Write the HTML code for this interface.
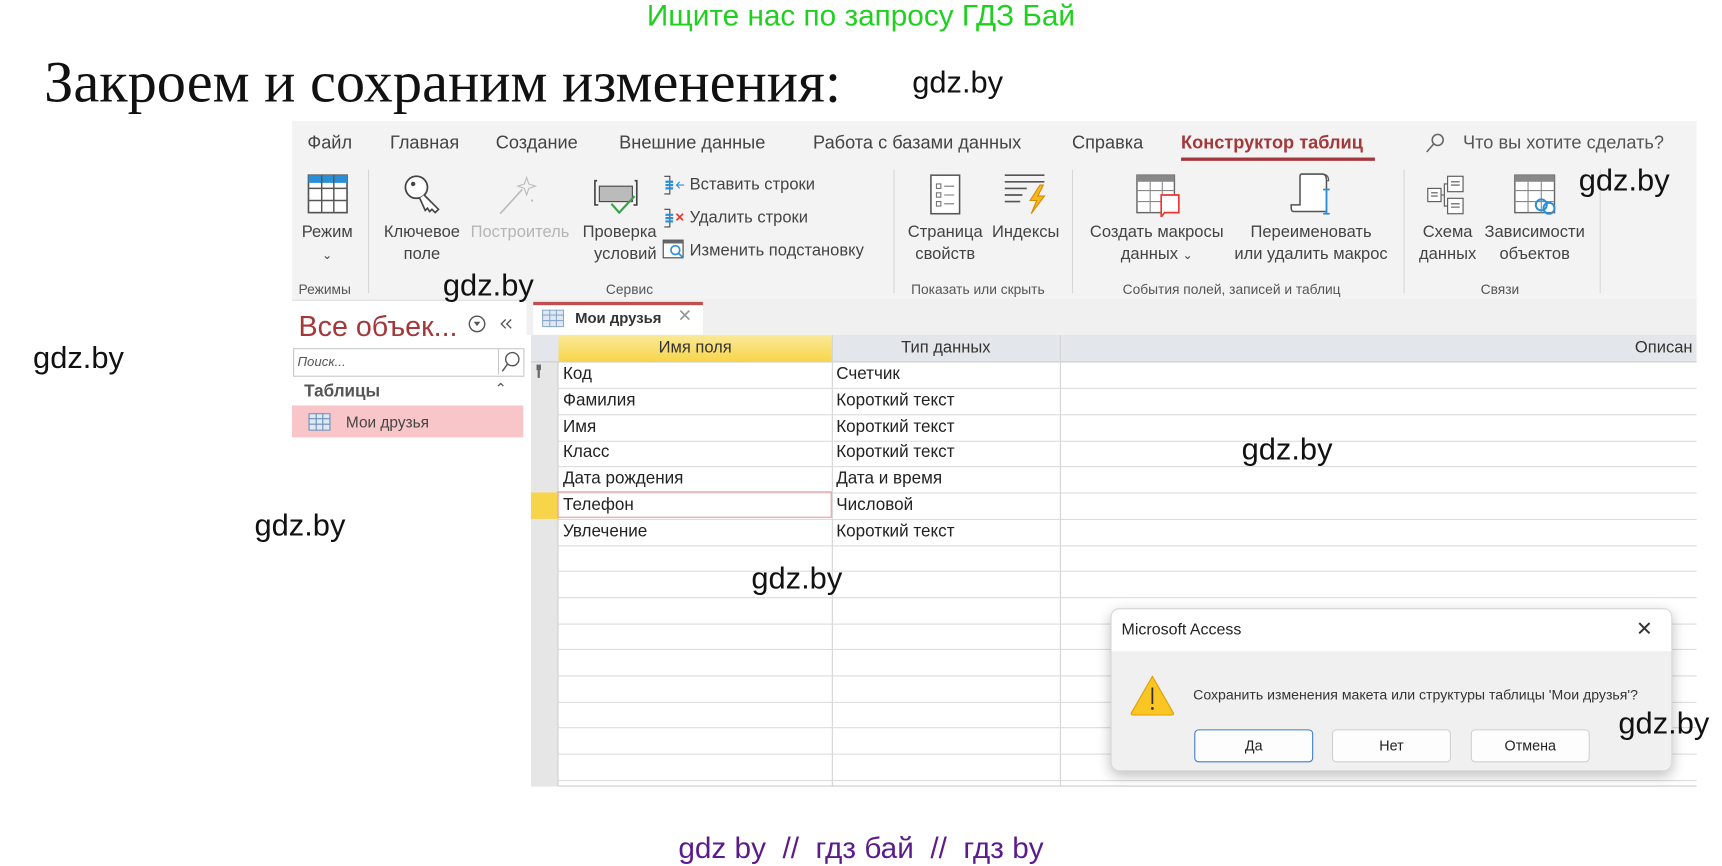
<!DOCTYPE html>
<html><head><meta charset="utf-8">
<style>
html,body{margin:0;padding:0;background:#fff;width:1722px;height:865px;overflow:hidden}
#w{position:absolute;left:0;top:0;width:1563px;height:785px;transform:scale(1.1017);transform-origin:0 0;font-family:"Liberation Sans",sans-serif}
.a{position:absolute;white-space:nowrap}
.rb{color:#444;font-size:15px;line-height:20px;text-align:center}
.gl{font-size:12.5px;color:#555;line-height:16px}
.gd{font-size:28px;color:#111;line-height:30px}
.row{position:absolute;left:507px;width:1033px;height:23.7px;border-bottom:1px solid #dcdcdc;font-size:15.5px;color:#222;line-height:23px}
.row span{position:absolute;left:4px}
.row b{position:absolute;left:252px;font-weight:normal}
.sep{position:absolute;width:1px;background:#d6d6d6}
.btn{position:absolute;top:662px;width:106px;height:28px;border:1px solid #d0d0d0;background:#fdfdfd;border-radius:4px;font-size:13px;line-height:28px;text-align:center;color:#222}
</style></head><body>
<div id="w">
<div class="a" style="left:0;width:1563px;top:-1px;text-align:center;color:#1fd11f;font-size:27px;line-height:30px">Ищите нас по запросу ГДЗ Бай</div>
<div class="a" style="left:40px;top:44px;font-family:'Liberation Serif',serif;font-size:53px;line-height:62px;color:#111">Закроем и сохраним изменения:</div>
<div class="a gd" style="left:828px;top:60px">gdz.by</div>

<!-- ribbon -->
<div class="a" style="left:265px;top:110px;width:1275px;height:162px;background:#f3f3f3;border-bottom:1px solid #ddd"></div>
<div class="a" style="left:265px;top:120px;font-size:16.5px;color:#444;line-height:20px">
<span class="a" style="left:14px">Файл</span><span class="a" style="left:89px">Главная</span><span class="a" style="left:185px">Создание</span><span class="a" style="left:297px">Внешние данные</span><span class="a" style="left:473px">Работа с базами данных</span><span class="a" style="left:708px">Справка</span><span class="a" style="left:807px;color:#a4373a;font-weight:bold">Конструктор таблиц</span><span class="a" style="left:1063px;color:#555">Что вы хотите сделать?</span></div>
<div class="a" style="left:1072px;top:143px;width:176px;height:3px;background:#a4373a"></div>
<svg class="a" style="left:1293px;top:120px" width="20" height="20"><circle cx="12" cy="7" r="5" fill="none" stroke="#666" stroke-width="1.4"/><line x1="8.5" y1="10.5" x2="2" y2="18" stroke="#666" stroke-width="1.4"/></svg>

<!-- ribbon icons -->
<svg class="a" style="left:279px;top:158px" width="38" height="38"><rect x="1" y="1" width="35" height="34" fill="#fff" stroke="#555" stroke-width="1.5"/><rect x="1" y="1" width="35" height="7" fill="#2b8fd8"/><path d="M1 13H36M1 24H36M13 1V35M24 1V35" stroke="#555" stroke-width="1.3"/></svg>
<svg class="a" style="left:365px;top:158px" width="40" height="38"><circle cx="13" cy="12" r="10" fill="#fff" stroke="#444" stroke-width="1.6"/><circle cx="10" cy="9" r="2" fill="#444"/><path d="M20 19L33 32 30 35 27 32 25 34 23 31 21 33 16 22" fill="#fff" stroke="#444" stroke-width="1.5"/></svg>
<svg class="a" style="left:450px;top:158px" width="40" height="40"><path d="M4 36L24 14" stroke="#bbb" stroke-width="1.5"/><path d="M28 3l2 6 6 2-6 2-2 6-2-6-6-2 6-2z" fill="none" stroke="#bbb"/><circle cx="33" cy="24" r="1" fill="#bbb"/></svg>
<svg class="a" style="left:538px;top:160px" width="44" height="38"><path d="M4 4H2V26H5M38 4H40V26H37" stroke="#444" fill="none" stroke-width="1.5"/><rect x="6" y="9" width="30" height="14" fill="#bbb" stroke="#444"/><path d="M17 25L24 33 38 18" stroke="#3aa34a" fill="none" stroke-width="2"/></svg>
<svg class="a" style="left:601px;top:157px" width="22" height="80"><path d="M2 3H7V19H2" fill="none" stroke="#444"/><path d="M3 8H10M3 11H10M3 14H10" stroke="#2b8fd8" stroke-width="2"/><path d="M20 11H13M16 8L13 11 16 14" stroke="#2b8fd8" fill="none"/><path d="M2 33H7V49H2" fill="none" stroke="#444"/><path d="M3 38H10M3 41H10M3 44H10" stroke="#2b8fd8" stroke-width="2"/><path d="M13 37L19 43M19 37L13 43" stroke="#e33" stroke-width="1.5"/><rect x="1" y="61" width="18" height="16" fill="#fff" stroke="#444"/><rect x="1" y="61" width="18" height="3" fill="#666"/><circle cx="12" cy="70" r="4" fill="none" stroke="#2b8fd8" stroke-width="1.5"/><path d="M15 73L19 77" stroke="#2b8fd8" stroke-width="1.5"/></svg>
<div class="a" style="left:626px;top:158px;font-size:15px;color:#444;line-height:20px">Вставить строки</div>
<div class="a" style="left:626px;top:188px;font-size:15px;color:#444;line-height:20px">Удалить строки</div>
<div class="a" style="left:626px;top:218px;font-size:15px;color:#444;line-height:20px">Изменить подстановку</div>

<svg class="a" style="left:843px;top:158px" width="30" height="38"><rect x="2" y="1" width="26" height="35" fill="#fff" stroke="#555" stroke-width="1.4"/><path d="M7 9h4v4h-4zM7 17h4v4h-4zM7 25h4v4h-4zM14 11h9M14 19h9M14 27h9" stroke="#777" fill="none"/></svg>
<svg class="a" style="left:910px;top:156px" width="42" height="40"><path d="M2 3H38M2 9H38M2 15H22M2 21H18M2 27H16" stroke="#555" stroke-width="1.5"/><path d="M34 12L25 26H31L26 38 38 22H32L37 12Z" fill="#f5b81e" stroke="#d98a00"/></svg>
<svg class="a" style="left:1030px;top:157px" width="44" height="40"><rect x="2" y="2" width="34" height="34" fill="#fff" stroke="#666" stroke-width="1.3"/><rect x="2" y="2" width="34" height="6" fill="#888"/><path d="M2 16H36M2 26H36M14 8V36M25 8V36" stroke="#888"/><path d="M24 20H40V36H27L24 40Z" fill="#fff" stroke="#e33" stroke-width="1.5"/></svg>
<svg class="a" style="left:1170px;top:156px" width="44" height="42"><path d="M12 2H30Q34 2 34 7V36H4Q2 36 2 32V30H10V4Q10 2 12 2Z" fill="#fff" stroke="#555" stroke-width="1.4"/><path d="M30 2Q36 2 36 8H34" fill="none" stroke="#555"/><path d="M34 16V38M31 16H37M31 38H37" stroke="#2b8fd8" stroke-width="1.6"/></svg>
<svg class="a" style="left:1294px;top:157px" width="40" height="40"><rect x="2" y="14" width="12" height="12" fill="#fff" stroke="#555"/><rect x="20" y="3" width="14" height="14" fill="#fff" stroke="#555"/><rect x="20" y="23" width="14" height="14" fill="#fff" stroke="#555"/><path d="M14 20H17V10H20M17 20V30H20M5 18h6M5 21h6M23 8h8M23 11h8M23 28h8M23 31h8" stroke="#555" fill="none"/></svg>
<svg class="a" style="left:1373px;top:157px" width="44" height="40"><rect x="2" y="2" width="36" height="34" fill="#fff" stroke="#666" stroke-width="1.3"/><rect x="2" y="2" width="36" height="6" fill="#888"/><path d="M2 16H38M2 26H38M14 8V36M26 8V36" stroke="#888"/><circle cx="26" cy="29" r="5" fill="none" stroke="#2b8fd8" stroke-width="1.8"/><circle cx="33" cy="32" r="5" fill="none" stroke="#2b8fd8" stroke-width="1.8"/></svg>

<div class="a rb" style="left:262px;top:201px;width:70px">Режим<br><span style="font-size:11px">&#8964;</span></div>
<div class="a rb" style="left:340px;top:201px;width:86px">Ключевое<br>поле</div>
<div class="a rb" style="left:424px;top:201px;width:96px;color:#b5b5b5">Построитель</div>
<div class="a rb" style="left:520px;top:201px;width:76px;text-align:right">Проверка<br>условий</div>
<div class="a rb" style="left:818px;top:201px;width:80px">Страница<br>свойств</div>
<div class="a rb" style="left:896px;top:201px;width:70px">Индексы</div>
<div class="a rb" style="left:980px;top:201px;width:140px">Создать макросы<br>данных <span style="font-size:11px">&#8964;</span></div>
<div class="a rb" style="left:1110px;top:201px;width:160px">Переименовать<br>или удалить макрос</div>
<div class="a rb" style="left:1284px;top:201px;width:60px">Схема<br>данных</div>
<div class="a rb" style="left:1340px;top:201px;width:106px">Зависимости<br>объектов</div>

<div class="a gl" style="left:271px;top:255px">Режимы</div>
<div class="a gl" style="left:550px;top:255px">Сервис</div>
<div class="a gl" style="left:827px;top:255px">Показать или скрыть</div>
<div class="a gl" style="left:1019px;top:255px">События полей, записей и таблиц</div>
<div class="a gl" style="left:1344px;top:255px">Связи</div>
<div class="sep" style="left:334px;top:154px;height:112px"></div>
<div class="sep" style="left:811px;top:154px;height:112px"></div>
<div class="sep" style="left:973px;top:154px;height:112px"></div>
<div class="sep" style="left:1274px;top:154px;height:112px"></div>
<div class="sep" style="left:1452px;top:154px;height:112px"></div>

<!-- nav pane -->
<div class="a" style="left:271px;top:280px;font-size:26px;color:#a4373a;line-height:32px">Все объек...</div>
<svg class="a" style="left:425px;top:285px" width="44" height="18"><circle cx="8" cy="9" r="7" fill="none" stroke="#555" stroke-width="1.3"/><path d="M5 7L8 11 11 7Z" fill="#555"/><path d="M34 5L30 9 34 13M39 5L35 9 39 13" stroke="#555" fill="none" stroke-width="1.2"/></svg>
<div class="a" style="left:266px;top:316px;width:208px;height:24px;border:1px solid #c8c8c8;background:#fff"></div>
<div class="a" style="left:270px;top:320px;font-size:12px;font-style:italic;color:#555;line-height:16px">Поиск...</div>
<div class="a" style="left:452px;top:317px;width:1px;height:23px;background:#c8c8c8"></div>
<svg class="a" style="left:454px;top:318px" width="20" height="22"><circle cx="11" cy="8" r="6" fill="none" stroke="#555" stroke-width="1.3"/><path d="M7 12L2 19" stroke="#555" stroke-width="1.3"/></svg>
<div class="a" style="left:276px;top:346px;font-size:15.5px;font-weight:bold;color:#555;line-height:20px">Таблицы</div>
<div class="a" style="left:449px;top:345px;font-size:13px;color:#555">&#8963;</div>
<div class="a" style="left:265px;top:368px;width:210px;height:29px;background:#f8c6c8"></div>
<svg class="a" style="left:280px;top:375px" width="20" height="16"><rect x="0.5" y="0.5" width="19" height="15" fill="#dfe9f5" stroke="#6a8fb8"/><path d="M0 5H20M0 10H20M7 0V16M13 0V16" stroke="#6a8fb8"/></svg>
<div class="a" style="left:314px;top:374px;font-size:14px;color:#444;line-height:18px">Мои друзья</div>

<!-- document area -->
<div class="a" style="left:478px;top:272px;width:1062px;height:32px;background:#f0f0f0"></div>
<div class="a" style="left:484px;top:274px;width:154px;height:30px;background:#fff;border-top:3px solid #c0504d;box-sizing:border-box"></div>
<svg class="a" style="left:492px;top:281px" width="20" height="16"><rect x="0.5" y="0.5" width="19" height="15" fill="#dfe9f5" stroke="#8aa8c8"/><path d="M0 5H20M0 10H20M7 0V16M13 0V16" stroke="#8aa8c8"/></svg>
<div class="a" style="left:522px;top:280px;font-size:13.5px;font-weight:bold;color:#333;line-height:18px">Мои друзья</div>
<div class="a" style="left:615px;top:278px;font-size:16px;color:#999;line-height:20px">✕</div>

<div class="a" style="left:482px;top:304px;width:1058px;height:410px;background:#fff"></div>
<div class="a" style="left:482px;top:304px;width:25px;height:410px;background:#e6e6e6;border-right:1px solid #d0d0d0;box-sizing:border-box"></div>
<div class="a" style="left:482px;top:304px;width:1058px;height:24px;background:#e3e6ea;border-bottom:1px solid #ccc"></div>
<div class="a" style="left:507px;top:304px;width:248px;height:24px;background:linear-gradient(#fbe99a,#f7d54a);border-bottom:1px solid #ccc;text-align:center;font-size:15px;color:#333;line-height:24px">Имя поля</div>
<div class="a" style="left:755px;top:304px;width:207px;text-align:center;font-size:15px;color:#333;line-height:24px">Тип данных</div>
<div class="a" style="left:1484px;top:304px;font-size:15px;color:#333;line-height:24px">Описан</div>
<div class="a" style="left:755px;top:304px;width:1px;height:410px;background:#d4d4d4"></div>
<div class="a" style="left:962px;top:304px;width:1px;height:410px;background:#d4d4d4"></div>
<svg class="a" style="left:485px;top:330px" width="8" height="14"><path d="M2 1h4v5h-1v7h-2v-7h-1z" fill="#666"/></svg>
<div class="a" style="left:482px;top:447px;width:25px;height:24px;background:#f7d54a"></div>

<div class="row" style="top:328px"><span>Код</span><b>Счетчик</b></div>
<div class="row" style="top:352px"><span>Фамилия</span><b>Короткий текст</b></div>
<div class="row" style="top:376px"><span>Имя</span><b>Короткий текст</b></div>
<div class="row" style="top:399px"><span>Класс</span><b>Короткий текст</b></div>
<div class="row" style="top:423px"><span>Дата рождения</span><b>Дата и время</b></div>
<div class="row" style="top:447px"><span>Телефон</span><b>Числовой</b></div>
<div class="row" style="top:471px"><span>Увлечение</span><b>Короткий текст</b></div>
<div class="row" style="top:494px"></div><div class="row" style="top:518px"></div><div class="row" style="top:542px"></div><div class="row" style="top:565px"></div><div class="row" style="top:589px"></div><div class="row" style="top:613px"></div><div class="row" style="top:636px"></div><div class="row" style="top:660px"></div><div class="row" style="top:684px"></div>
<div class="a" style="left:506px;top:446px;width:249px;height:24px;border:1.5px solid #ef9a9a;box-sizing:border-box"></div>
<div class="a" style="left:507px;top:713px;width:1033px;height:1px;background:#ccc"></div>

<!-- dialog -->
<div class="a" style="left:1008px;top:552px;width:508px;height:146px;background:#f0f0f0;border:1px solid #d8d8d8;border-radius:8px;box-shadow:0 4px 12px rgba(0,0,0,.25);overflow:hidden">
<div style="position:absolute;left:0;top:0;width:100%;height:38px;background:#fff"></div>
<div class="a" style="left:9px;top:10px;font-size:14.5px;color:#222;line-height:18px">Microsoft Access</div>
<div class="a" style="left:476px;top:7px;font-size:18px;color:#333;line-height:22px">✕</div>
<svg class="a" style="left:16px;top:58px" width="42" height="40"><path d="M21 3L40 36Q41 38 38 38H4Q1 38 2 36Z" fill="#f9c623" stroke="#e0a000"/><path d="M21 13V28" stroke="#333" stroke-width="1.6"/><circle cx="21" cy="32" r="1.3" fill="#333"/></svg>
<div class="a" style="left:74px;top:70px;font-size:12.8px;color:#333;line-height:16px">Сохранить изменения макета или структуры таблицы 'Мои друзья'?</div>
</div>
<div class="btn" style="left:1084px;border-color:#3d7ec7">Да</div>
<div class="btn" style="left:1209px">Нет</div>
<div class="btn" style="left:1335px">Отмена</div>

<!-- watermarks -->
<div class="a gd" style="left:1433px;top:149px">gdz.by</div>
<div class="a gd" style="left:402px;top:244px">gdz.by</div>
<div class="a gd" style="left:30px;top:310px">gdz.by</div>
<div class="a gd" style="left:1127px;top:393px">gdz.by</div>
<div class="a gd" style="left:231px;top:462px">gdz.by</div>
<div class="a gd" style="left:682px;top:510px">gdz.by</div>
<div class="a gd" style="left:1469px;top:642px">gdz.by</div>
<div class="a" style="left:0;width:1563px;top:754px;text-align:center;color:#5b1b8c;font-size:27px;line-height:32px">gdz by &nbsp;// &nbsp;гдз бай &nbsp;// &nbsp;гдз by</div>
</div>
</body></html>
